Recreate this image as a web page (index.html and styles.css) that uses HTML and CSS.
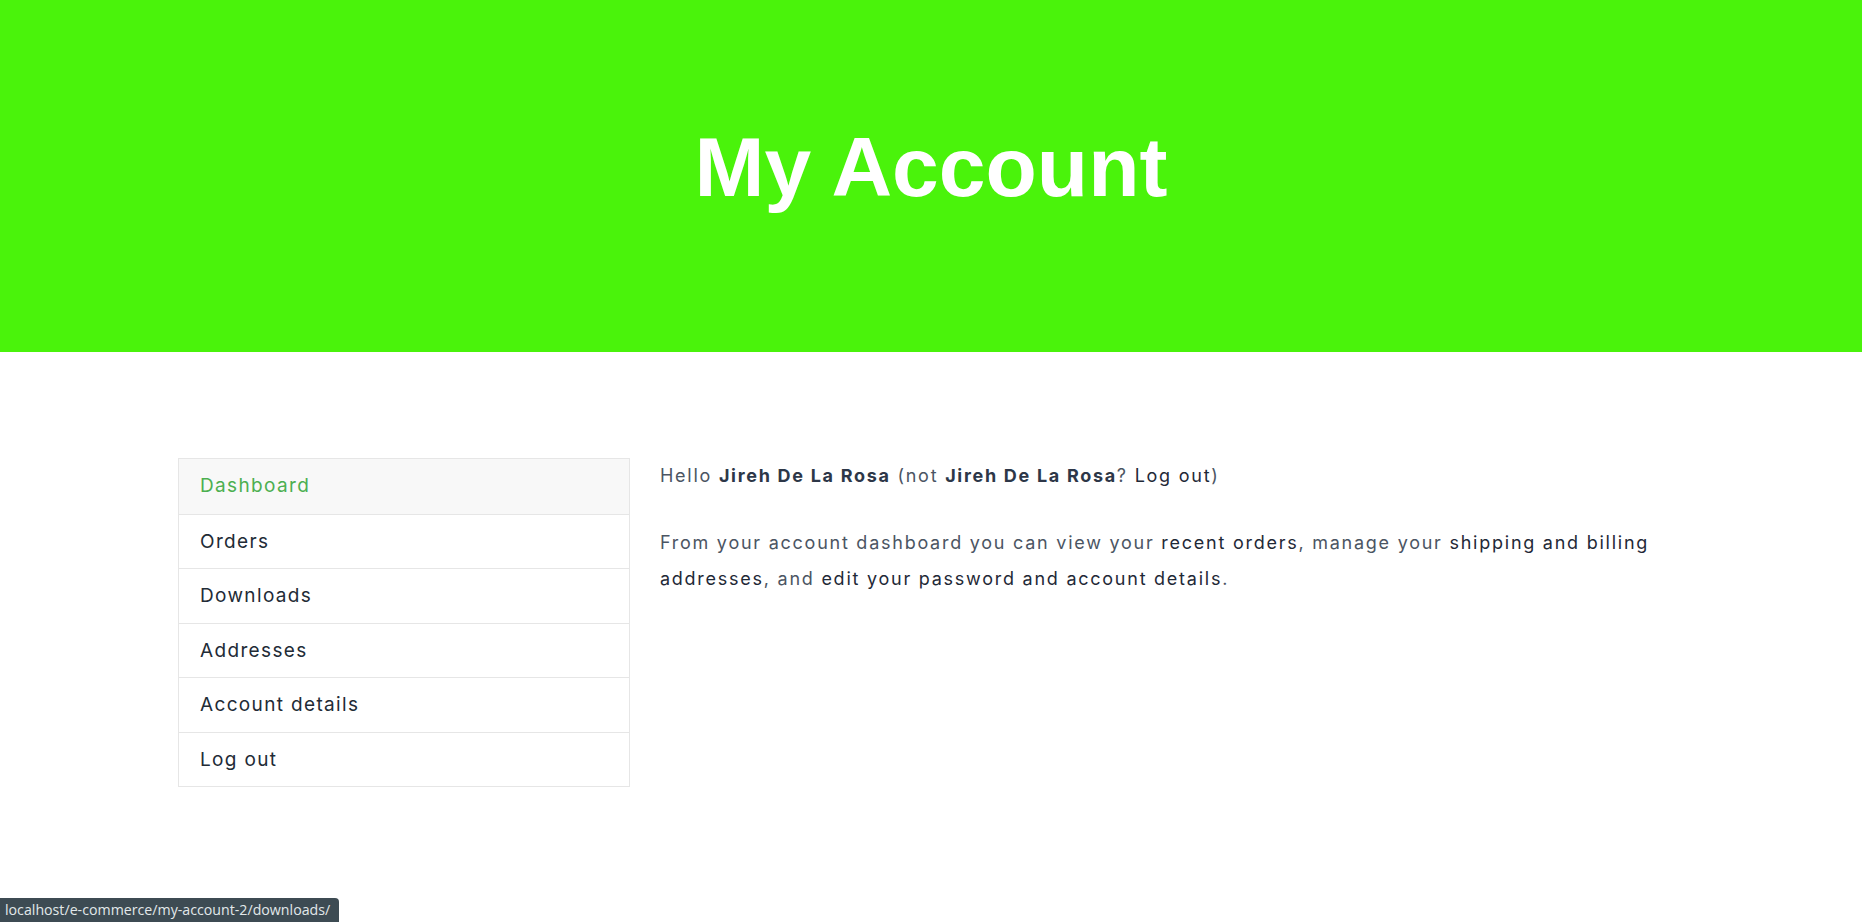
FILE: index.html
```html
<!DOCTYPE html>
<html lang="en">
<head>
<meta charset="utf-8">
<title>My Account</title>
<link rel="stylesheet" href="styles.css">
</head>
<body>
<header class="hero">
  <h1 class="hero-title">My Account</h1>
</header>
<main class="account">
  <nav class="account-nav">
    <a class="nav-item is-active" href="#">Dashboard</a>
    <a class="nav-item" href="#">Orders</a>
    <a class="nav-item" href="#">Downloads</a>
    <a class="nav-item" href="#">Addresses</a>
    <a class="nav-item" href="#">Account details</a>
    <a class="nav-item" href="#">Log out</a>
  </nav>
  <section class="account-content">
    <p class="hello">Hello <strong>Jireh De La Rosa</strong> (not <strong>Jireh De La Rosa</strong>? <a href="#">Log out</a>)</p>
    <p>From your account dashboard you can view your <a href="#">recent orders</a>, manage your <a href="#">shipping and billing addresses</a>, and <a href="#">edit your password and account details</a>.</p>
  </section>
</main>
<div class="status-bubble">localhost/e-commerce/my-account-2/downloads/</div>
</body>
</html>
```
FILE: styles.css
```css
* { box-sizing: border-box; }
html, body { margin: 0; padding: 0; }
body {
  background: #ffffff;
  font-family: Inter, "Liberation Sans", Arial, sans-serif;
  color: #4b5563;
}
.hero {
  height: 352px;
  background: #4af30b;
  display: flex;
  justify-content: center;
  align-items: flex-start;
  padding-top: 125px;
}
.hero-title {
  margin: 0;
  font-family: "Liberation Sans", Arial, sans-serif;
  font-weight: 700;
  font-size: 84px;
  line-height: 1;
  color: #ffffff;
}
.account {
  margin: 106px 178px 0;
  display: flex;
  justify-content: space-between;
  align-items: flex-start;
}
.account-nav {
  width: 30%;
  display: flex;
  flex-direction: column;
  border: 1px solid #e6e6e6;
}
.nav-item {
  display: block;
  height: 54.5px;
  line-height: 53px;
  padding: 0 21px;
  font-size: 19px;
  letter-spacing: 1.35px;
  color: #222b36;
  text-decoration: none;
  border-top: 1px solid #e6e6e6;
}
.nav-item:first-child { border-top: 0; }
.nav-item.is-active {
  background: #f8f8f8;
  color: #4caf50;
}
.account-content {
  width: 68%;
  font-size: 18px;
  line-height: 36px;
  letter-spacing: 1.75px;
}
.account-content p { margin: 0 0 31px; }
.account-content strong { color: #2d3748; font-weight: 700; letter-spacing: 1.7px; }
.account-content a { color: #1f2937; text-decoration: none; }
.status-bubble {
  position: fixed;
  left: 0;
  bottom: 0;
  height: 24px;
  padding: 0 9px 0 5px;
  background: #3d4b53;
  color: #e2e8ea;
  font-family: "Open Sans", sans-serif;
  font-size: 14.2px;
  line-height: 24px;
  border-top-right-radius: 4px;
}
```
